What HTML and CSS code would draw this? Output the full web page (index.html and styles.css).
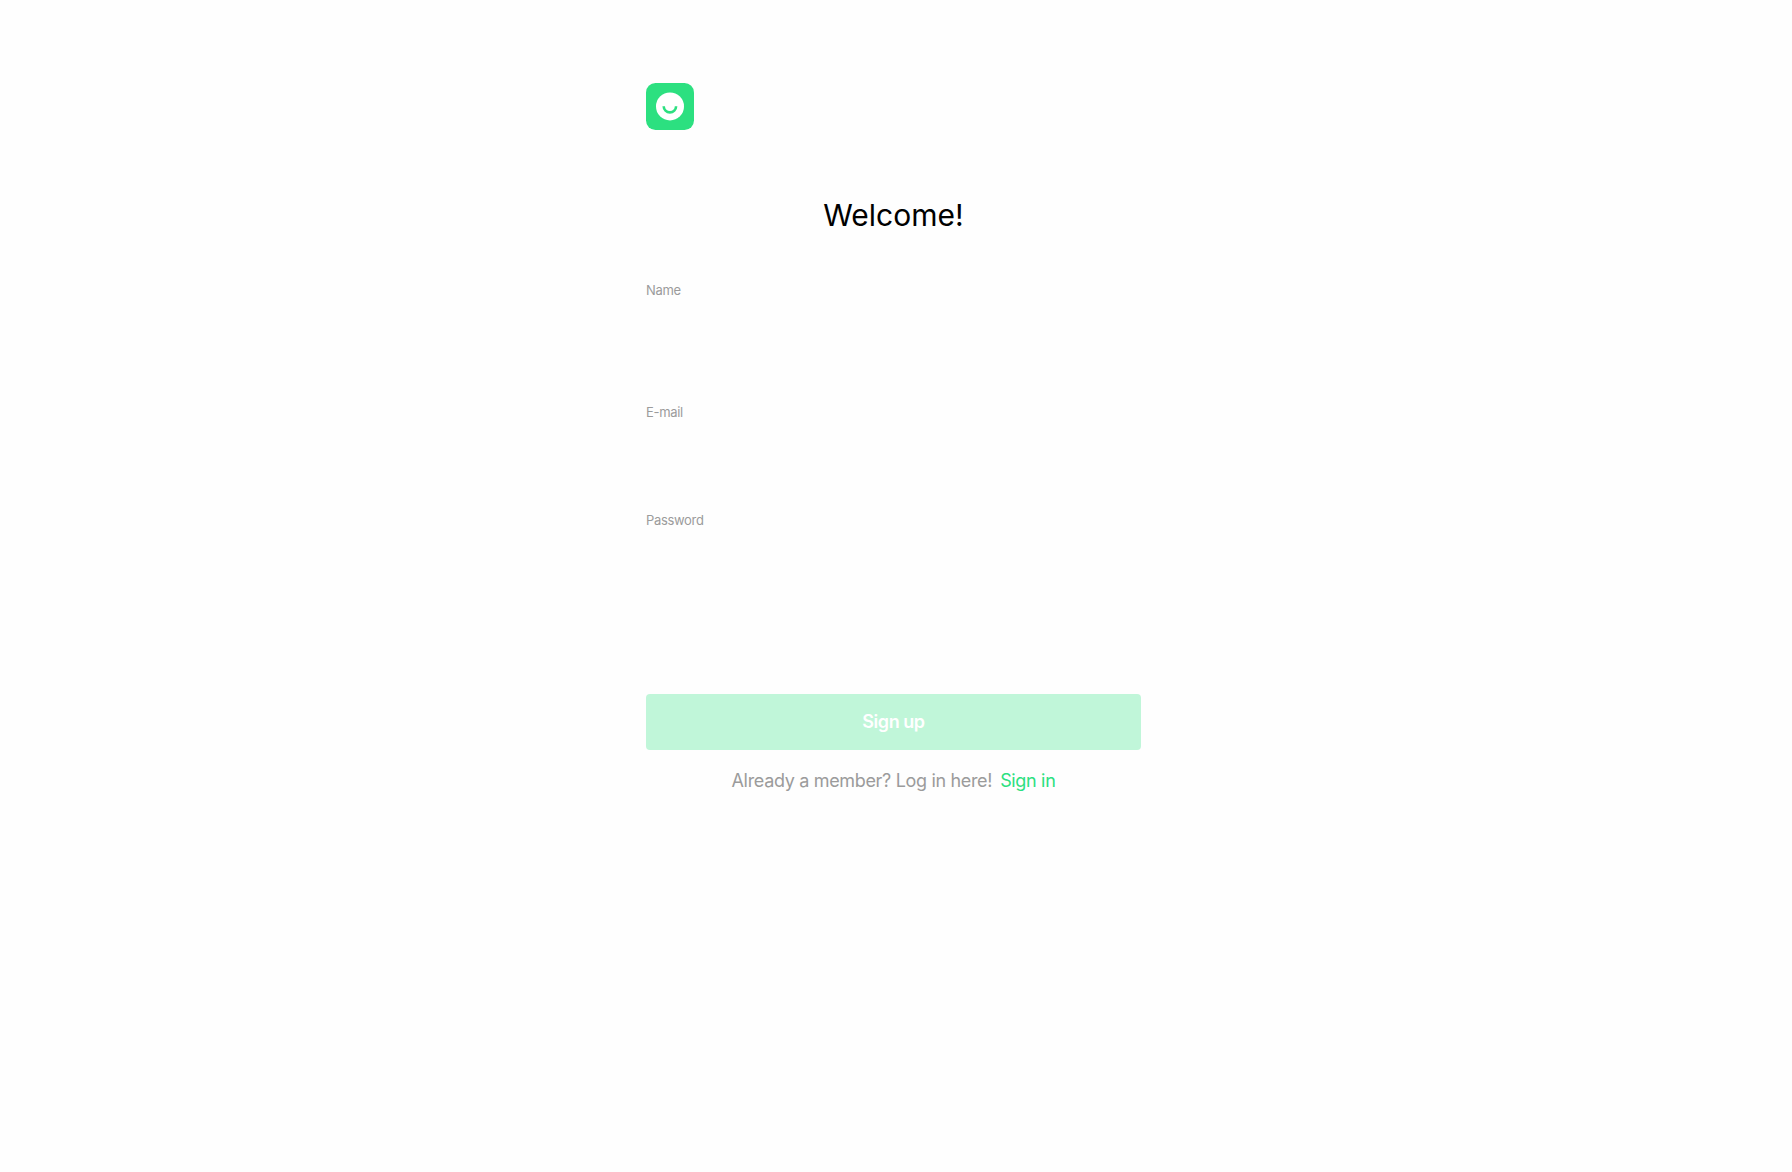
FILE: index.html
```html
<!DOCTYPE html>
<html lang="en">
<head>
<meta charset="utf-8">
<title>Sign up</title>
<link rel="stylesheet" href="styles.css">
</head>
<body>
<main class="signup">
  <svg class="logo" viewBox="0 0 48 47" aria-hidden="true">
    <rect width="48" height="47" rx="9.5" fill="#2ce080"/>
    <circle cx="24" cy="23.4" r="14" fill="#fff"/>
    <path d="M17.7 23.2a6.2 6.2 0 0 0 12.4 0" fill="none" stroke="#2ce080" stroke-width="2.6"/>
  </svg>
  <h1 class="title">Welcome!</h1>
  <form class="form">
    <label class="field field-name">Name</label>
    <label class="field field-email">E-mail</label>
    <label class="field field-password">Password</label>
    <button class="submit" type="button">Sign up</button>
  </form>
  <p class="footer"><span>Already a member? Log in here!</span><a class="link">Sign in</a></p>
</main>
</body>
</html>
```

FILE: styles.css
```css
body {
  margin: 0;
  background: #fefefe;
  font-family: Inter, sans-serif;
}
.signup {
  display: flex;
  flex-direction: column;
  width: 495px;
  margin-left: 646px;
  padding-top: 83px;
}
.logo {
  width: 48px;
  height: 47px;
}
.title {
  margin: 65px 0 0;
  font-size: 30px;
  line-height: 40px;
  font-weight: 400;
  text-align: center;
  color: #000;
}
.form {
  display: flex;
  flex-direction: column;
}
.field {
  font-size: 13px;
  line-height: 20px;
  letter-spacing: -0.33px;
  color: #9b9b9b;
}
.field-name {
  height: 122px;
  margin-top: 45px;
}
.field-email {
  height: 108px;
}
.field-password {
  height: 184px;
}
.submit {
  height: 56px;
  border: 0;
  border-radius: 4px;
  background: #c0f6d9;
  color: #fff;
  font: 600 18px/24px Inter, sans-serif;
  letter-spacing: -0.45px;
}
.footer {
  display: flex;
  justify-content: center;
  gap: 8px;
  margin: 19px 0 0;
  font-size: 18px;
  line-height: 24px;
  letter-spacing: -0.33px;
  color: #9b9b9b;
}
.link {
  color: #2ce080;
}
```
